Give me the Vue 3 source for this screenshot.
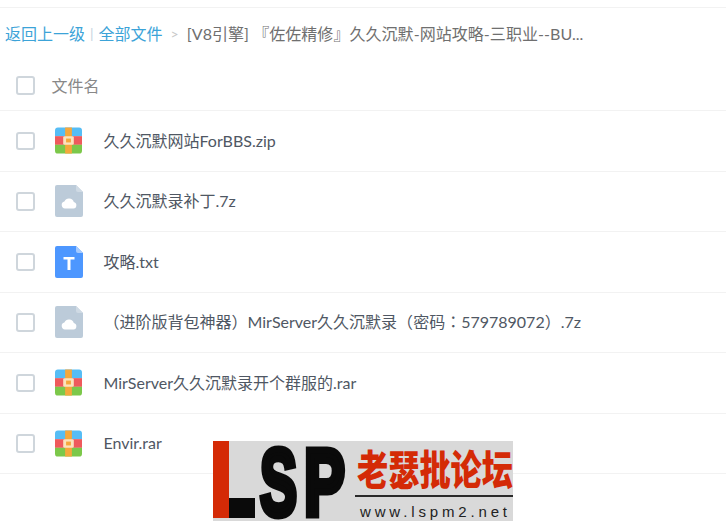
<script setup>
const files = [
  { id: 1, name: '久久沉默网站ForBBS.zip', type: 'zip' },
  { id: 2, name: '久久沉默录补丁.7z', type: 'cloud' },
  { id: 3, name: '攻略.txt', type: 'txt' },
  { id: 4, name: '（进阶版背包神器）MirServer久久沉默录（密码：579789072）.7z', type: 'cloud' },
  { id: 5, name: 'MirServer久久沉默录开个群服的.rar', type: 'zip' },
  { id: 6, name: 'Envir.rar', type: 'zip' },
];

// 全角标点要居中，SC 字体里是靠边的，所以单独拆出来
const splitName = (name) => name.split(/([（）：])/).filter(Boolean);
const isPunct = (part) => /^[（）：]$/.test(part);
</script>

<template>
  <div class="page">
    <nav class="crumbs">
      <a class="link">返回上一级</a>
      <span class="sep">|</span>
      <a class="link">全部文件</a>
      <span class="arrow">&gt;</span>
      <span class="current">[V8引擎] 『佐佐精修』久久沉默-网站攻略-三职业--BU...</span>
    </nav>

    <div class="head">
      <span class="check"></span>
      <span class="head-label">文件名</span>
    </div>

    <ul class="list">
      <li v-for="file in files" :key="file.id" class="row">
        <span class="check"></span>
        <span class="icon">
          <svg v-if="file.type === 'zip'" width="27" height="27" viewBox="0 0 28 27">
            <path d="M3 0h22a3 3 0 0 1 3 3v6H0V3a3 3 0 0 1 3-3z" fill="#56bdf5" />
            <rect y="9" width="28" height="9" fill="#ef5a5c" />
            <path d="M0 18h28v6a3 3 0 0 1-3 3H3a3 3 0 0 1-3-3z" fill="#7cc84a" />
            <rect x="10.500" width="7" height="27" fill="#f5a83c" />
            <rect x="8.500" y="9" width="11" height="9" rx="1.500" fill="#fbe3bd" />
            <rect x="11.500" y="11.500" width="5" height="4" fill="#f5a83c" />
          </svg>
          <svg v-else-if="file.type === 'cloud'" width="28" height="32" viewBox="0 0 28 32">
            <path d="M2 0h19l7 7v23a2 2 0 0 1-2 2H2a2 2 0 0 1-2-2V2a2 2 0 0 1 2-2z" fill="#bccbd9" />
            <path d="M21 0l7 7h-5a2 2 0 0 1-2-2z" fill="#cfdae4" />
            <path d="M10 23.500a3.500 3.500 0 0 1-.6-6.900 5 5 0 0 1 9.400.5 3.250 3.250 0 0 1-.3 6.400z" fill="#fff" />
          </svg>
          <svg v-else width="28" height="32" viewBox="0 0 28 32">
            <path d="M2 0h19l7 7v23a2 2 0 0 1-2 2H2a2 2 0 0 1-2-2V2a2 2 0 0 1 2-2z" fill="#4d97ff" />
            <path d="M21 0l7 7h-5a2 2 0 0 1-2-2z" fill="#a6cbff" />
            <path d="M8.500 11h11v2.500h-4V24h-3V13.500h-4z" fill="#fff" />
          </svg>
        </span>
        <span class="name">
          <template v-for="(part, i) in splitName(file.name)" :key="i">
            <span v-if="isPunct(part)" class="punct">{{ part }}</span>
            <template v-else>{{ part }}</template>
          </template>
        </span>
      </li>
    </ul>

    <svg class="stamp" width="300" height="80" viewBox="0 0 300 80">
      <rect width="300" height="80" fill="#d9d9d9" />
      <rect width="16" height="77" fill="#d42a06" />
      <rect x="16" y="57" width="26" height="20" fill="#0a0a0a" />
      <text class="stamp-lsp" x="47" y="73.500" textLength="37" lengthAdjust="spacingAndGlyphs">S</text>
      <text class="stamp-lsp" x="91" y="73.500" textLength="41" lengthAdjust="spacingAndGlyphs">P</text>
      <g transform="translate(144 44) scale(1 1.320)">
        <text class="stamp-cn" textLength="156" lengthAdjust="spacingAndGlyphs">老瑟批论坛</text>
      </g>
      <rect x="142" y="54" width="158" height="2" fill="#2a2a2a" />
      <text class="stamp-url" x="147" y="76" textLength="147">www.lspm2.net</text>
    </svg>
  </div>
</template>

<style>
body {
  background: #fff;
}
</style>

<style scoped>
.page {
  position: relative;
  width: 726px;
  height: 526px;
  overflow: hidden;
  padding-top: 7px;
  box-sizing: border-box;
  font-family: "Lato", "Noto Sans CJK SC", sans-serif;
  font-size: 16px;
  color: #4f5763;
}
.crumbs {
  display: flex;
  align-items: center;
  height: 54px;
  padding-left: 5px;
  padding-bottom: 3px;
  box-sizing: border-box;
  border-top: 1px solid #f2f2f2;
  white-space: nowrap;
  color: #6f6f6f;
}
.link {
  color: #3ca3d8;
}
.sep {
  margin: 0 5px;
  color: #c4d4de;
  font-size: 14px;
}
.arrow {
  margin: 0 8px;
  color: #c8c8c8;
  font-size: 14px;
}
.current {
  letter-spacing: 0.05px;
}
.head {
  display: flex;
  align-items: center;
  height: 50px;
  box-sizing: border-box;
  padding-left: 16px;
  border-bottom: 1px solid #f2f2f2;
}
.head-label {
  margin-left: 17px;
  padding-bottom: 2px;
  color: #888;
}
.list {
  margin: 0;
  padding: 0;
  list-style: none;
}
.row {
  display: flex;
  align-items: center;
  height: 60.500px;
  box-sizing: border-box;
  padding-left: 16px;
  border-bottom: 1px solid #f2f2f2;
}
.check {
  flex: none;
  width: 18.500px;
  height: 18.500px;
  box-sizing: border-box;
  border: 2px solid #cfd6dc;
  border-radius: 3px;
}
.icon {
  flex: none;
  display: flex;
  justify-content: center;
  width: 28px;
  margin-left: 20px;
}
.name {
  margin-left: 21px;
  padding-bottom: 2px;
  white-space: nowrap;
}
.punct {
  font-family: "Noto Sans CJK TC", sans-serif;
}
.stamp {
  position: absolute;
  left: 213px;
  top: 441px;
}
.stamp-lsp {
  font-family: "Liberation Sans", sans-serif;
  font-weight: 700;
  font-size: 95px;
  fill: #0a0a0a;
  stroke: #0a0a0a;
  stroke-width: 7px;
}
.stamp-cn {
  font-family: "Noto Sans CJK SC", sans-serif;
  font-weight: 900;
  font-size: 31px;
  fill: #d42a06;
}
.stamp-url {
  font-family: "Liberation Sans", sans-serif;
  font-size: 15px;
  fill: #222;
}
</style>
